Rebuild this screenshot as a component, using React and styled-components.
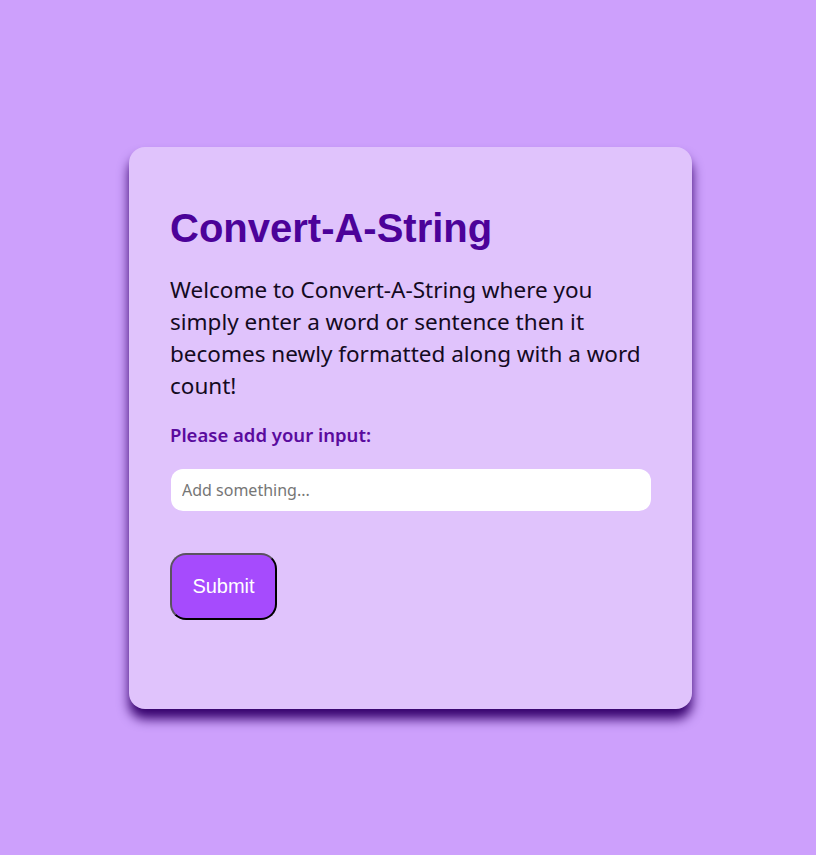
import React from "react"
import styled, { createGlobalStyle } from "styled-components"

const GlobalStyle = createGlobalStyle`
  * {
    box-sizing: border-box;
  }
  body {
    margin: 0;
    background-color: #cda0fc;
    font-family: "Noto Sans", "Open Sans", sans-serif;
  }
`

const Page = styled.main`
  min-height: 100vh;
  display: flex;
  align-items: center;
  justify-content: center;
  padding-left: 5px;
`

const Card = styled.section`
  width: 563px;
  height: 562px;
  background-color: #e0c3fc;
  border-radius: 16px;
  padding: 58px 41px 40px 41px;
  box-shadow: 0 10px 12px #35006c;
`

const Title = styled.h1`
  font-family: "Liberation Sans", Arial, sans-serif;
  font-size: 40px;
  font-weight: 700;
  line-height: 46px;
  color: #4c0299;
  margin: 0 0 23px 0;
`

const Intro = styled.p`
  font-size: 22.5px;
  line-height: 32px;
  color: #140a1f;
  margin: 0 0 22px 0;
`

const Label = styled.label`
  display: block;
  font-size: 18.5px;
  font-weight: 600;
  line-height: 22px;
  color: #5a0b9e;
  margin-bottom: 23px;
`

const Input = styled.input`
  display: block;
  width: 480px;
  height: 42px;
  margin-left: 1px;
  padding: 0 11px;
  border: none;
  border-radius: 12px;
  background-color: #ffffff;
  font-family: "Noto Sans", "Open Sans", sans-serif;
  font-size: 16px;
  color: #333;
  outline: none;
  &::placeholder {
    color: #767676;
  }
`

const SubmitButton = styled.button`
  display: block;
  margin-top: 42px;
  width: 107px;
  height: 67px;
  background-color: #a64bfd;
  color: #ffffff;
  font-family: "Liberation Sans", Arial, sans-serif;
  font-size: 20px;
  border-radius: 16px;
  border: 2px solid #000;
  border-top-color: #5b5360;
  border-left-color: #5b5360;
  cursor: pointer;
`

const App = () => (
  <>
    <GlobalStyle />
    <Page>
      <Card>
        <Title>Convert-A-String</Title>
        <Intro>
          Welcome to Convert-A-String where you simply enter a word or sentence then it becomes
          newly formatted along with a word count!
        </Intro>
        <form onSubmit={(e) => e.preventDefault()}>
          <Label htmlFor="userInput">Please add your input:</Label>
          <Input id="userInput" type="text" placeholder="Add something..." />
          <SubmitButton type="submit">Submit</SubmitButton>
        </form>
      </Card>
    </Page>
  </>
)

export default App
